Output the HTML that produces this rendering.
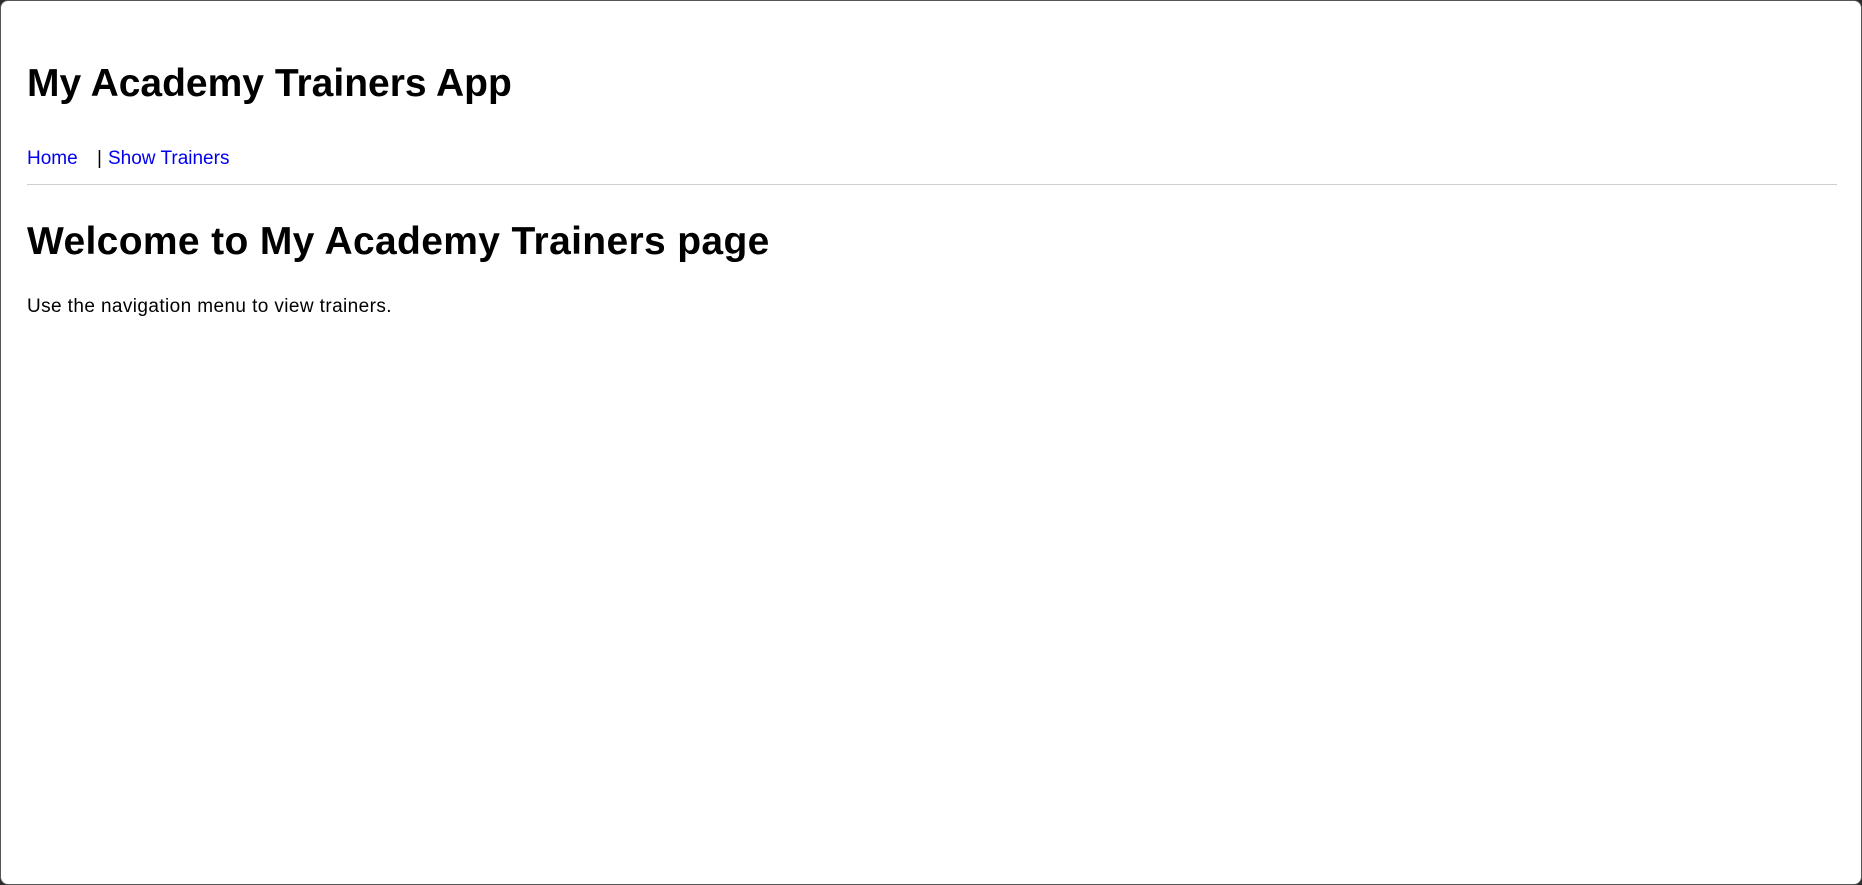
<!DOCTYPE html>
<html><head><meta charset="utf-8"><style>
html,body{margin:0;padding:0;width:1862px;height:885px;overflow:hidden;background:#2b2b2b;}
.win{position:absolute;left:0;top:0;width:1860px;height:883px;background:#fff;border:1px solid #555;border-radius:8px;}
.t{position:absolute;left:26px;white-space:nowrap;font-family:"Liberation Sans",sans-serif;line-height:1;color:#000;}
.h{font-size:39px;font-weight:bold;}
.n{font-size:19px;}
a{color:#0000ee;text-decoration:none;}
.hr{position:absolute;left:26px;width:1810px;top:183px;height:1px;background:#cfcfcf;}
</style></head><body>
<div class="win">
<div class="t h" style="top:63px">My Academy Trainers App</div>
<div class="t n" style="top:148px"><a>Home</a><span style="position:absolute;left:70px">|</span><a style="position:absolute;left:81px">Show Trainers</a></div>
<div class="hr"></div>
<div class="t h" style="top:221px;letter-spacing:0.35px">Welcome to My Academy Trainers page</div>
<div class="t n" style="top:296px;letter-spacing:0.4px">Use the navigation menu to view trainers.</div>
</div>
</body></html>
